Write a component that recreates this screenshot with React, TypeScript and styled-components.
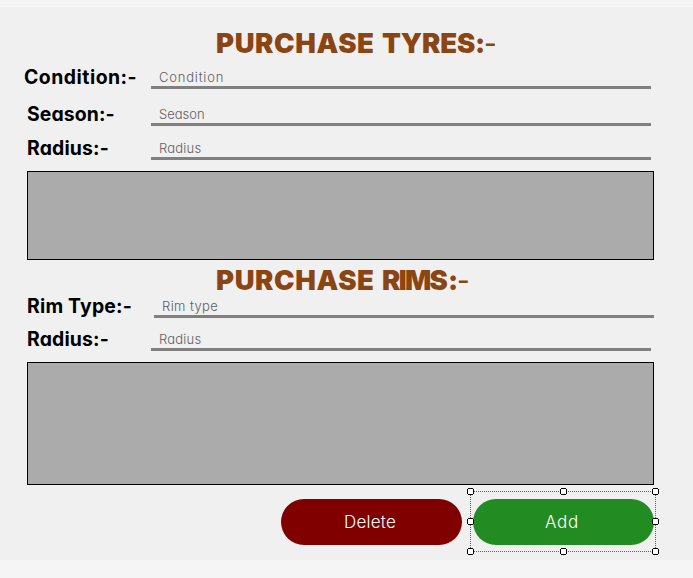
import React from "react";
import styled, { createGlobalStyle } from "styled-components";

const GlobalStyle = createGlobalStyle`
  * { box-sizing: border-box; }
  body { margin: 0; background: #f5f5f5; }
  body, button, input { font-family: Inter, "Open Sans", sans-serif; font-feature-settings: "cv11" 1; }
`;

const Page = styled.div`
  height: 578px;
  padding-top: 7px;
  background: #f5f5f5;
  overflow: hidden;
`;

const Form = styled.form`
  height: 553px;
  padding-left: 24px;
  background: #f0f0f0;
  display: flex;
  flex-direction: column;
`;

const Title = styled.h1<{ $height: number; $lift?: number }>`
  margin: 0;
  padding: 0 0 ${(p) => p.$lift ?? 0}px 192px;
  height: ${(p) => p.$height}px;
  flex: none;
  display: flex;
  align-items: flex-end;
  font-size: 27.5px;
  font-weight: 900;
  line-height: 34px;
  color: #8b4513;
  white-space: pre;
`;

const Word = styled.span<{ $space: number; $width: number }>`
  width: ${(p) => p.$width}px;
  letter-spacing: ${(p) => p.$space}px;
`;

const Dash = styled.span`
  font-weight: 500;
`;

const Row = styled.div<{ $height: number; $gutter?: number }>`
  height: ${(p) => p.$height}px;
  flex: none;
  display: grid;
  grid-template-columns: ${(p) => p.$gutter ?? 127}px 500px;
  align-items: end;
  align-content: end;
`;

const Label = styled.label<{ $indent?: number; $space: number }>`
  padding: 0 0 0 ${(p) => p.$indent ?? 3}px;
  font-size: 19.4px;
  font-weight: 700;
  line-height: 24px;
  letter-spacing: ${(p) => p.$space}px;
  color: #000;
  white-space: nowrap;
`;

const Field = styled.input<{ $space: number }>`
  width: 500px;
  height: 28px;
  padding: 6px 8px 0;
  border: 0;
  border-bottom: 3px solid #808080;
  border-radius: 0;
  outline: 0;
  background: transparent;
  font-size: 13px;
  font-weight: 300;
  line-height: 19px;
  letter-spacing: ${(p) => p.$space}px;
  &::placeholder { color: #606060; opacity: 1; }
`;

const Panel = styled.div<{ $height: number }>`
  flex: none;
  width: 627px;
  height: ${(p) => p.$height}px;
  margin: 11px 0 0 3px;
  border: 1px solid #000;
  background: #ababab;
`;

const Actions = styled.div`
  display: flex;
  gap: 11px;
  margin: 14px 0 0 257px;
`;

const Slot = styled.div`
  position: relative;
  width: 181px;
  height: 46px;
`;

const Pill = styled.button<{ $color: string; $space: number }>`
  width: 181px;
  height: 46px;
  padding: 0 3px 0 0;
  border: 0;
  border-radius: 23px;
  background: ${(p) => p.$color};
  color: #fff;
  font-size: 17px;
  font-weight: 300;
  letter-spacing: ${(p) => p.$space}px;
`;

const Selection = styled.svg`
  position: absolute;
  left: -6px;
  top: -11px;
  pointer-events: none;
`;

const handles = [
  [0, 0], [93, 0], [185, 0],
  [0, 30], [185, 30],
  [0, 60], [93, 60], [185, 60],
];

function SelectionFrame() {
  return (
    <Selection width="193" height="68" shapeRendering="crispEdges">
      <path
        d="M3 3.5H189M3 63.5H189M3.5 3V64M188.5 3V64"
        fill="none"
        stroke="#606060"
        strokeDasharray="1 1"
      />
      {handles.map(([x, y]) => (
        <g key={`${x}-${y}`} transform={`translate(${x} ${y})`}>
          <path d="M1 0H6V1H7V6H6V7H1V6H0V1H1Z" fill="#000" />
          <path d="M1 1H6V6H1Z" fill="#fff" />
        </g>
      ))}
    </Selection>
  );
}

export default function App() {
  return (
    <Page>
      <GlobalStyle />
      <Form>
        <Title $height={54} $lift={1}>
          <Word $width={166} $space={0.6}>PURCHASE</Word>
          <Word $width={93} $space={-0.1}>TYRES</Word>
          <Word $width={9} $space={-1}>:</Word>
          <Dash>-</Dash>
        </Title>
        <Row $height={28}>
          <Label $indent={0} $space={0.5}>Condition:-</Label>
          <Field $space={0.8} placeholder="Condition" />
        </Row>
        <Row $height={37}>
          <Label $space={0.1}>Season:-</Label>
          <Field $space={0} placeholder="Season" />
        </Row>
        <Row $height={34}>
          <Label $space={0.15}>Radius:-</Label>
          <Field $space={0.2} placeholder="Radius" />
        </Row>
        <Panel $height={89} />
        <Title $height={37}>
          <Word $width={166} $space={0.6}>PURCHASE</Word>
          <Word $width={66} $space={-1.7}>RIMS</Word>
          <Word $width={9} $space={-1}>:</Word>
          <Dash>-</Dash>
        </Title>
        <Row $height={21} $gutter={130}>
          <Label $space={0.2}>Rim Type:-</Label>
          <Field $space={0.4} placeholder="Rim type" />
        </Row>
        <Row $height={33}>
          <Label $space={0.15}>Radius:-</Label>
          <Field $space={0.2} placeholder="Radius" />
        </Row>
        <Panel $height={123} />
        <Actions>
          <Pill type="button" $color="#800000" $space={0.25}>Delete</Pill>
          <Slot>
            <Pill type="button" $color="#228b22" $space={0.7}>Add</Pill>
            <SelectionFrame />
          </Slot>
        </Actions>
      </Form>
    </Page>
  );
}
